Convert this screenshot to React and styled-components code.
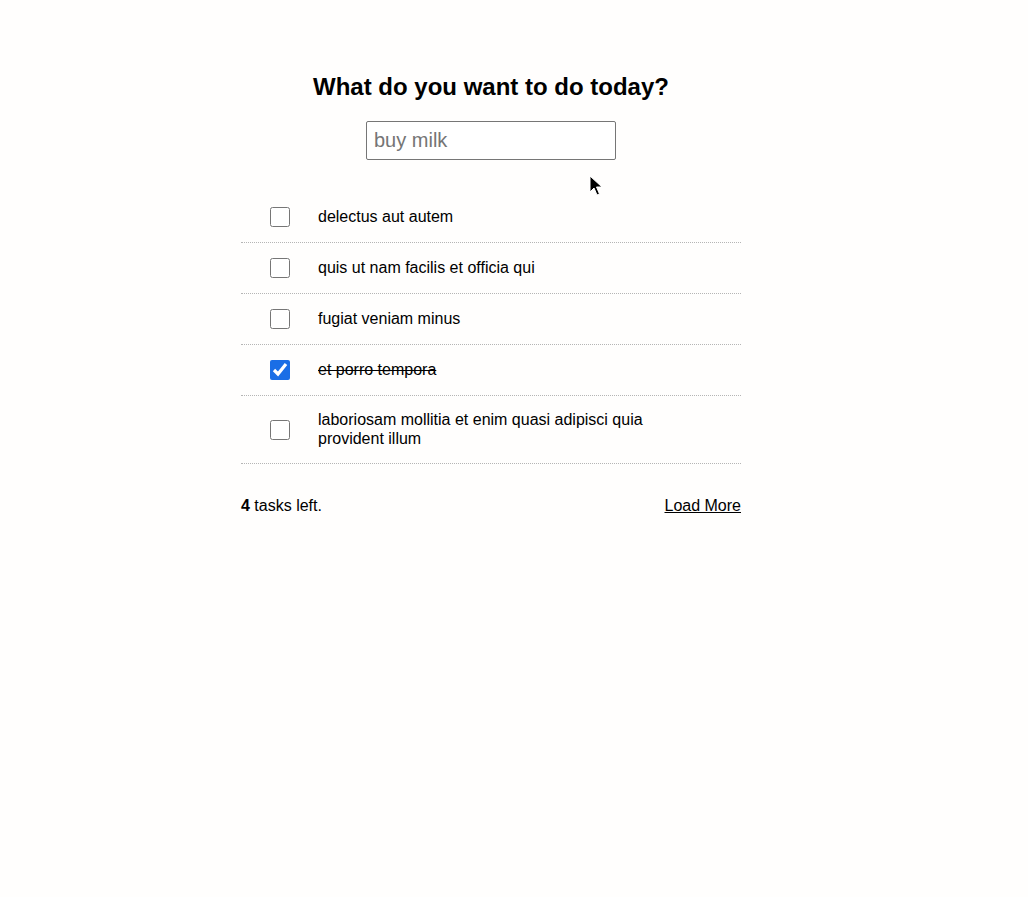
import React from "react";
import styled, { createGlobalStyle } from "styled-components";

const GlobalStyle = createGlobalStyle`
  html, body {
    margin: 0;
    padding: 0;
    background-color: #fffefd;
  }
  body {
    font-family: "Liberation Sans", Arial, sans-serif;
    color: #000;
  }
`;

const Page = styled.main`
  position: relative;
  width: 982px;
  min-height: 897px;
  display: flex;
  flex-direction: column;
  align-items: center;
  padding-top: 73px;
  box-sizing: border-box;
`;

const Title = styled.h2`
  margin: 0;
  font-size: 24px;
  line-height: 28px;
  font-weight: bold;
`;

const TaskInput = styled.input`
  margin-top: 20px;
  width: 250px;
  height: 39px;
  box-sizing: border-box;
  padding: 0 7px;
  font-family: inherit;
  font-size: 20px;
  border: 1px solid #767676;
  border-radius: 2px;
  background: #fff;
  &::placeholder {
    color: #757575;
  }
`;

const List = styled.ul`
  list-style: none;
  margin: 32px 0 0;
  padding: 0;
  width: 500px;
`;

const Row = styled.li`
  display: flex;
  align-items: center;
  padding: 15px 0;
  border-bottom: 1px dotted #b5b5b5;
`;

const CheckCell = styled.div`
  width: 77px;
  display: flex;
  justify-content: center;
  flex-shrink: 0;
`;

const Check = styled.input`
  width: 20px;
  height: 20px;
  margin: 0 0 0 1px;
  accent-color: #1a6ee6;
`;

const Label = styled.span`
  width: 380px;
  font-size: 16px;
  line-height: 18.5px;
  text-decoration: ${(p) => (p.$done ? "line-through" : "none")};
`;

const Footer = styled.div`
  width: 500px;
  margin-top: 33px;
  display: flex;
  justify-content: space-between;
  align-items: center;
  font-size: 16px;
  line-height: 18px;
`;

const LoadMore = styled.a`
  color: #000;
  text-decoration: underline;
  cursor: pointer;
`;

const Cursor = styled.svg`
  position: absolute;
  left: 589px;
  top: 175px;
  pointer-events: none;
`;

const todos = [
  { id: 1, title: "delectus aut autem", done: false },
  { id: 2, title: "quis ut nam facilis et officia qui", done: false },
  { id: 3, title: "fugiat veniam minus", done: false },
  { id: 4, title: "et porro tempora", done: true },
  {
    id: 5,
    title: "laboriosam mollitia et enim quasi adipisci quia provident illum",
    done: false,
  },
];

export default function App() {
  const left = todos.filter((t) => !t.done).length;

  return (
    <>
      <GlobalStyle />
      <Page>
        <Title>What do you want to do today?</Title>
        <TaskInput placeholder="buy milk" />
        <List>
          {todos.map((todo) => (
            <Row key={todo.id}>
              <CheckCell>
                <Check type="checkbox" defaultChecked={todo.done} />
              </CheckCell>
              <Label $done={todo.done}>{todo.title}</Label>
            </Row>
          ))}
        </List>
        <Footer>
          <span>
            <b>{left}</b> tasks left.
          </span>
          <LoadMore>Load More</LoadMore>
        </Footer>
        <Cursor width="14" height="22" viewBox="0 0 14 22">
          <path
            d="M1 1 L1 17 L5 13 L8 20 L10.5 19 L7.5 12 L13 12 Z"
            fill="#000"
            stroke="#fff"
            strokeWidth="1"
            strokeLinejoin="round"
          />
        </Cursor>
      </Page>
    </>
  );
}
